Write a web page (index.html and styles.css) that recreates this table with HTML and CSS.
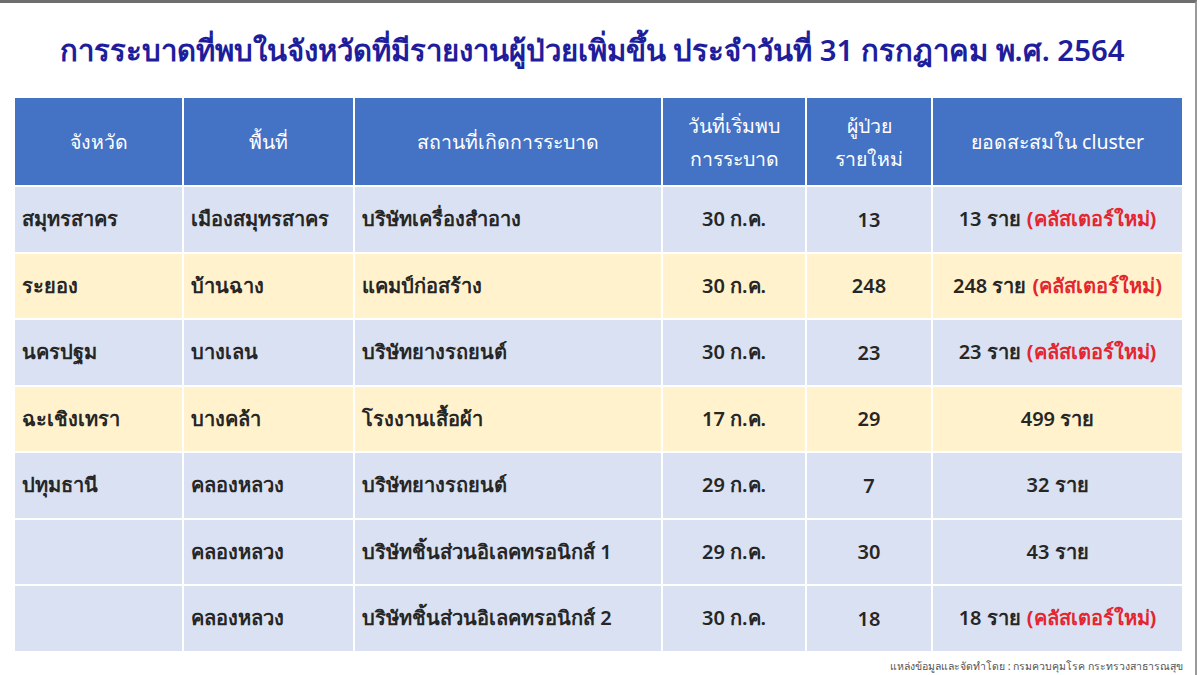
FILE: index.html
```html
<!DOCTYPE html>
<html lang="th">
<head>
<meta charset="utf-8">
<link rel="stylesheet" href="styles.css">
</head>
<body>
<div class="frame">
  <h1 class="title">การระบาดที่พบในจังหวัดที่มีรายงานผู้ป่วยเพิ่มขึ้น ประจำวันที่ 31 กรกฎาคม พ.ศ. 2564</h1>
  <div class="grid">
    <div class="hd">จังหวัด</div>
    <div class="hd">พื้นที่</div>
    <div class="hd">สถานที่เกิดการระบาด</div>
    <div class="hd">วันที่เริ่มพบ<br>การระบาด</div>
    <div class="hd">ผู้ป่วย<br>รายใหม่</div>
    <div class="hd">ยอดสะสมใน cluster</div>

    <div class="c l b">สมุทรสาคร</div>
    <div class="c l b">เมืองสมุทรสาคร</div>
    <div class="c l b">บริษัทเครื่องสำอาง</div>
    <div class="c m b">30 ก.ค.</div>
    <div class="c m b">13</div>
    <div class="c m b">13 ราย <span class="new">(คลัสเตอร์ใหม่)</span></div>

    <div class="c l y">ระยอง</div>
    <div class="c l y">บ้านฉาง</div>
    <div class="c l y">แคมป์ก่อสร้าง</div>
    <div class="c m y">30 ก.ค.</div>
    <div class="c m y">248</div>
    <div class="c m y">248 ราย <span class="new">(คลัสเตอร์ใหม่)</span></div>

    <div class="c l b">นครปฐม</div>
    <div class="c l b">บางเลน</div>
    <div class="c l b">บริษัทยางรถยนต์</div>
    <div class="c m b">30 ก.ค.</div>
    <div class="c m b">23</div>
    <div class="c m b">23 ราย <span class="new">(คลัสเตอร์ใหม่)</span></div>

    <div class="c l y">ฉะเชิงเทรา</div>
    <div class="c l y">บางคล้า</div>
    <div class="c l y">โรงงานเสื้อผ้า</div>
    <div class="c m y">17 ก.ค.</div>
    <div class="c m y">29</div>
    <div class="c m y">499 ราย</div>

    <div class="c l b">ปทุมธานี</div>
    <div class="c l b">คลองหลวง</div>
    <div class="c l b">บริษัทยางรถยนต์</div>
    <div class="c m b">29 ก.ค.</div>
    <div class="c m b">7</div>
    <div class="c m b">32 ราย</div>

    <div class="c l b"></div>
    <div class="c l b">คลองหลวง</div>
    <div class="c l b">บริษัทชิ้นส่วนอิเลคทรอนิกส์ 1</div>
    <div class="c m b">29 ก.ค.</div>
    <div class="c m b">30</div>
    <div class="c m b">43 ราย</div>

    <div class="c l b"></div>
    <div class="c l b">คลองหลวง</div>
    <div class="c l b">บริษัทชิ้นส่วนอิเลคทรอนิกส์ 2</div>
    <div class="c m b">30 ก.ค.</div>
    <div class="c m b">18</div>
    <div class="c m b">18 ราย <span class="new">(คลัสเตอร์ใหม่)</span></div>
  </div>
  <p class="source">แหล่งข้อมูลและจัดทำโดย : กรมควบคุมโรค กระทรวงสาธารณสุข</p>
</div>
</body>
</html>
```

FILE: styles.css
```css
html, body {
  margin: 0;
  padding: 0;
  background: #ffffff;
}
body {
  width: 1200px;
  height: 675px;
  overflow: hidden;
  font-family: "Noto Sans", "DejaVu Sans", sans-serif;
}
.frame {
  box-sizing: border-box;
  width: 1197px;
  height: 675px;
  border-top: 3px solid #6e6e6e;
  border-right: 2px solid #9a9a9a;
  padding: 0 0 0 15px;
}
.title {
  margin: 0;
  height: 95px;
  padding-right: 26px;
  display: flex;
  align-items: center;
  justify-content: center;
  font-size: 29.3px;
  font-weight: 600;
  color: #1e1e9c;
  white-space: nowrap;
}
.grid {
  display: grid;
  grid-template-columns: 167px 169px 306px 142px 124px 249px;
  grid-template-rows: 87px repeat(7, 64.5px);
  gap: 2px;
}
.hd {
  background: #4472c4;
  color: #ffffff;
  font-size: 19.5px;
  line-height: 33px;
  display: flex;
  align-items: center;
  justify-content: center;
  text-align: center;
}
.c {
  font-size: 20px;
  font-weight: 600;
  color: #262626;
  display: flex;
  align-items: center;
  white-space: nowrap;
}
.l {
  padding-left: 7px;
}
.m {
  justify-content: center;
}
.b {
  background: #d9e1f2;
}
.y {
  background: #fff2cc;
}
.new {
  color: #e3262f;
  font-weight: 700;
  margin-left: 6px;
}
.source {
  margin: 7px 0 0 0;
  width: 1168px;
  text-align: right;
  font-size: 10.5px;
  color: #555555;
}
```
